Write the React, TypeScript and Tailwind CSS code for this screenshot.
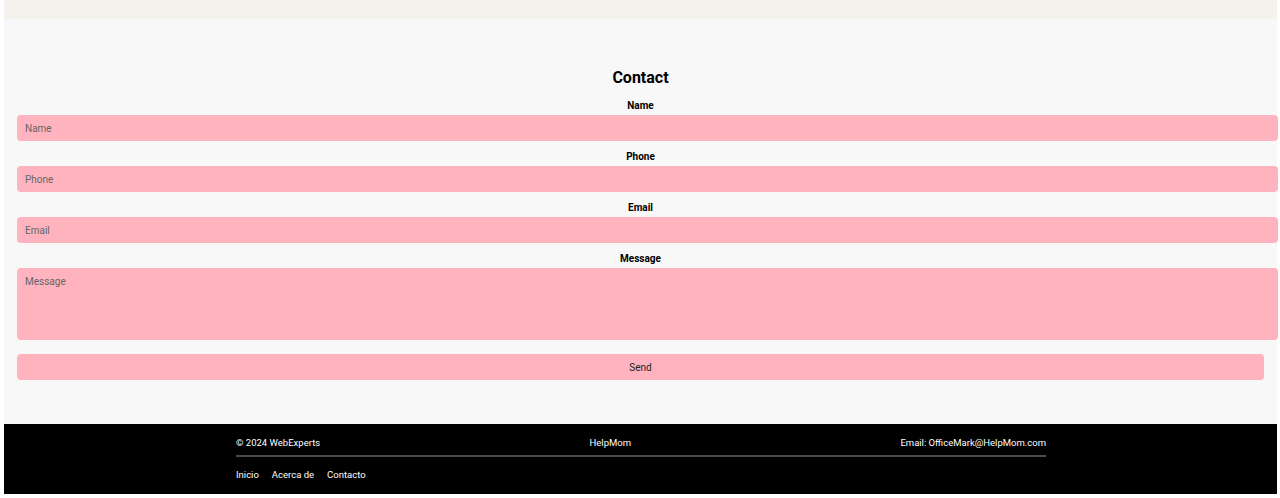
export default function App() {
  const fields = [
    { label: "Name", type: "text" },
    { label: "Phone", type: "tel" },
    { label: "Email", type: "email" },
  ];

  return (
    <div
      className="bg-white pl-[4px] pr-[3px] pb-[4px] min-h-[498px]"
      style={{ fontFamily: "Roboto, 'Liberation Sans', sans-serif" }}
    >
      {/* top bar */}
      <div className="h-[19px] bg-[#f5f1ec]" />

      {/* contact section */}
      <main className="bg-[#f8f8f8] px-[13px] pt-[48px] pb-[44px]">
        <h2 className="text-center text-[16px] leading-[22px] font-bold text-black mb-[10px]">
          Contact
        </h2>
        <form onSubmit={(e) => e.preventDefault()} className="flex flex-col">
          {fields.map((f) => (
            <div key={f.label} className="flex flex-col">
              <label className="text-center text-[10px] leading-[12px] pt-[1px] font-bold text-black mb-[3px]">
                {f.label}
              </label>
              <input
                type={f.type}
                placeholder={f.label}
                className="w-[calc(100%+14px)] h-[26px] mb-[9px] rounded-[4px] bg-[#ffb3be] px-[8px] text-[10px] text-[#333] placeholder:text-[#666] outline-none"
              />
            </div>
          ))}
          <label className="text-center text-[10px] leading-[12px] pt-[1px] font-bold text-black mb-[3px]">
            Message
          </label>
          <textarea
            placeholder="Message"
            className="w-[calc(100%+14px)] h-[72px] rounded-[4px] bg-[#ffb3be] px-[8px] pt-[8px] text-[10px] leading-[12px] text-[#333] placeholder:text-[#666] outline-none resize-none"
          />
          <button
            type="submit"
            className="mt-[14px] w-full h-[26px] rounded-[4px] bg-[#ffb3be] text-[10px] text-[#222]"
          >
            Send
          </button>
        </form>
      </main>

      {/* footer */}
      <footer className="bg-black text-white pt-[13px] pb-[13px]">
        <div className="w-[810px] ml-[232px]">
          <div className="flex justify-between text-[9.5px] leading-[12px]">
            <span>© 2024 WebExperts</span>
            <span>HelpMom</span>
            <span>Email: OfficeMark@HelpMom.com</span>
          </div>
          <div className="h-[2px] bg-[#4a4a4a] mt-[6px] mb-[12px]" />
          <nav className="flex gap-[13px] text-[9.5px] leading-[12px]">
            <a href="#">Inicio</a>
            <a href="#">Acerca de</a>
            <a href="#">Contacto</a>
          </nav>
        </div>
      </footer>
    </div>
  );
}
